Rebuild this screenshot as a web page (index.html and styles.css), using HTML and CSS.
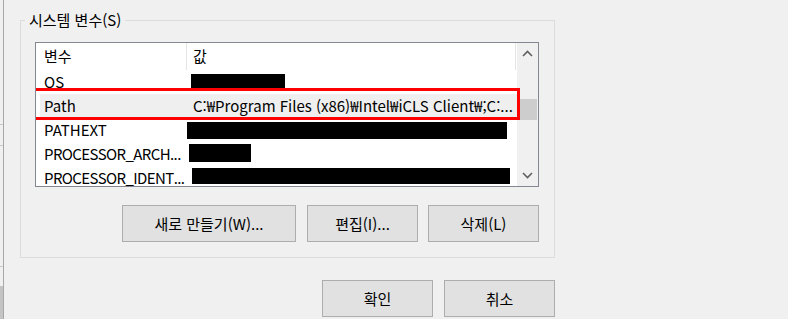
FILE: index.html
```html
<!DOCTYPE html>
<html lang="ko">
<head>
<meta charset="utf-8">
<link rel="stylesheet" href="styles.css">
</head>
<body>
<div class="page">
  <div class="edge">
    <div class="seg s1"></div>
    <div class="seg s2"></div>
    <div class="seg s3"></div>
    <div class="seg s4"></div>
    <div class="seg fill"></div>
  </div>
  <div class="dialog">
    <fieldset class="group">
      <legend>시스템 변수(S)</legend>
      <div class="listbox">
        <div class="listarea">
          <div class="header">
            <div class="hcell c1">변수</div>
            <div class="hcell c2">값</div>
          </div>
          <div class="row">
            <div class="cell c1">OS</div>
            <div class="cell c2"><span class="redact r-os"></span></div>
          </div>
          <div class="row selected">
            <div class="cell c1">Path</div>
            <div class="cell c2"><span class="val">C:₩Program Files (x86)₩Intel₩iCLS Client₩;C:...</span></div>
          </div>
          <div class="row">
            <div class="cell c1">PATHEXT</div>
            <div class="cell c2"><span class="redact r-ext"></span></div>
          </div>
          <div class="row">
            <div class="cell c1 tight">PROCESSOR_ARCH...</div>
            <div class="cell c2"><span class="redact r-arch"></span></div>
          </div>
          <div class="row">
            <div class="cell c1 tight">PROCESSOR_IDENT...</div>
            <div class="cell c2"><span class="redact r-ident"></span></div>
          </div>
          <div class="highlight-box"></div>
        </div>
        <div class="scrollbar">
          <div class="arrow">
            <svg width="11" height="7" viewBox="0 0 11 7"><polyline points="1,6 5.5,1.5 10,6" fill="none" stroke="#606060" stroke-width="1.6"/></svg>
          </div>
          <div class="track">
            <div class="thumb"></div>
          </div>
          <div class="arrow">
            <svg width="11" height="7" viewBox="0 0 11 7"><polyline points="1,1 5.5,5.5 10,1" fill="none" stroke="#606060" stroke-width="1.6"/></svg>
          </div>
        </div>
      </div>
      <div class="btnrow">
        <button class="btn wide">새로 만들기(W)...</button>
        <button class="btn">편집(I)...</button>
        <button class="btn">삭제(L)</button>
      </div>
    </fieldset>
    <div class="okrow">
      <button class="btn">확인</button>
      <button class="btn">취소</button>
    </div>
  </div>
</div>
</body>
</html>
```

FILE: styles.css
```css
html, body {
  margin: 0;
  padding: 0;
  background: #f0f0f0;
  width: 788px;
  height: 319px;
  overflow: hidden;
}
body {
  font-family: "Noto Sans CJK KR", "Noto Sans", sans-serif;
  font-size: 15px;
  color: #000;
}
.page {
  display: flex;
  height: 319px;
}
.edge {
  width: 3px;
  border-right: 1px solid #a8a8a8;
  display: flex;
  flex-direction: column;
}
.seg { border-bottom: 1px solid #c8c8c8; }
.s1 { height: 124px; }
.s2 { height: 20px; }
.s3 { height: 120px; }
.s4 { height: 19px; border-bottom: none; }
.seg.fill { flex: 1; background: #c4c4c4; border-bottom: none; }

.dialog {
  margin-left: 16px;
  padding-top: 12px;
  width: 535px;
  display: flex;
  flex-direction: column;
}
.group {
  box-sizing: border-box;
  width: 535px;
  margin: 0;
  border: 1px solid #dcdcdc;
  padding: 0 15px 15px 14px;
}
.group legend {
  margin-left: -10px;
  padding: 0 4px;
  line-height: 16px;
  height: 16px;
}
.listbox {
  margin-top: 14px;
  box-sizing: border-box;
  width: 504px;
  height: 145px;
  border: 1px solid #828790;
  background: #fff;
  display: flex;
  position: relative;
  overflow: hidden;
}
.listarea {
  flex: 1;
  display: flex;
  flex-direction: column;
  position: relative;
}
.header {
  display: flex;
  height: 27px;
  flex-shrink: 0;
}
.hcell {
  box-sizing: border-box;
  height: 27px;
  line-height: 26px;
  border-right: 1px solid #e5e5e5;
}
.hcell.c1 { width: 151px; padding-left: 8px; }
.hcell.c2 { width: 329px; padding-left: 6px; }
.row {
  display: flex;
  height: 24px;
  flex-shrink: 0;
  margin-left: 4px;
}
.row.selected { background: #efefef; }
.cell {
  box-sizing: border-box;
  height: 24px;
  line-height: 23px;
  white-space: nowrap;
  overflow: hidden;
}
.cell.c1 { width: 146px; padding-left: 4px; }
.cell.c1.tight { letter-spacing: -0.6px; }
.cell.c2 { flex: 1; display: flex; align-items: flex-start; }
.val { margin-left: 7px; }
.redact { display: block; background: #000; }
.r-os { margin: 4px 0 0 5px; width: 94px; height: 14px; }
.r-ext { margin: 4px 0 0 1px; width: 320px; height: 17px; }
.r-arch { margin: 2px 0 0 3px; width: 62px; height: 18px; }
.r-ident { margin: 2px 0 0 6px; width: 318px; height: 16px; }
.highlight-box {
  position: absolute;
  left: -4px;
  top: 45px;
  width: 482px;
  height: 26px;
  border: 3px solid #ff0000;
}
.scrollbar {
  width: 21px;
  background: #f0f0f0;
  display: flex;
  flex-direction: column;
}
.arrow {
  height: 21px;
  display: flex;
  align-items: center;
  justify-content: center;
}
.track {
  flex: 1;
  padding-top: 35px;
}
.thumb {
  margin-left: 1px;
  width: 19px;
  height: 21px;
  background: #cdcdcd;
}
.btnrow {
  margin-top: 18px;
  display: flex;
  justify-content: flex-end;
  gap: 10px;
  width: 504px;
}
.btn {
  box-sizing: border-box;
  height: 37px;
  width: 111px;
  background: #e1e1e1;
  border: 1px solid #adadad;
  border-radius: 0;
  font-family: "Noto Sans CJK KR", "Noto Sans", sans-serif;
  font-size: 15px;
  color: #000;
  padding: 0;
  line-height: 35px;
}
.btn.wide { width: 174px; margin-right: 1px; }
.okrow {
  margin-top: 22px;
  display: flex;
  justify-content: flex-end;
  gap: 11px;
}
```
